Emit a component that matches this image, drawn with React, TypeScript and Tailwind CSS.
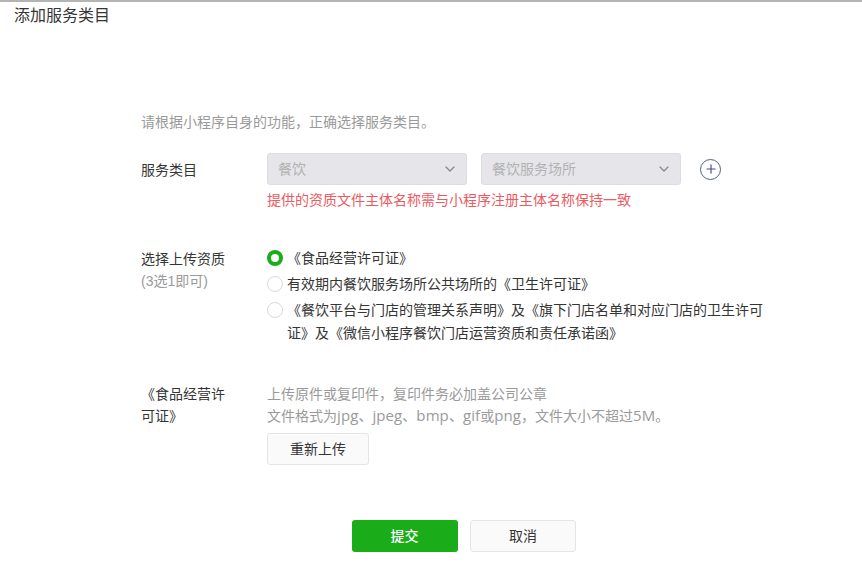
import { ChevronDown, Plus } from 'lucide-react'

const font = "font-['Liberation_Sans','Noto_Sans_CJK_SC',sans-serif]"

function DisabledSelect({ value }: { value: string }) {
  return (
    <div className="flex h-8 w-[200px] items-center justify-between rounded-[3px] border border-[#dcdce2] bg-[#e6e6ea] pl-[10px] pr-[8px] text-[14px] text-[#b2b2b2]">
      <span>{value}</span>
      <ChevronDown size={16} strokeWidth={2} className="text-[#8a8a8a]" />
    </div>
  )
}

function Radio({ checked }: { checked?: boolean }) {
  if (checked) {
    return <span className="mt-[2px] h-4 w-4 shrink-0 rounded-full border-[4px] border-[#1aad19] bg-white" />
  }
  return <span className="mt-[2px] h-4 w-4 shrink-0 rounded-full border border-[#d9d9d9] bg-white" />
}

function Latin({ children }: { children: string }) {
  return <span className="font-['Open_Sans',sans-serif] text-[15px] leading-[20px] tracking-[0.1px]">{children}</span>
}

export default function App() {
  return (
    <div className={`${font} h-[562px] w-[862px] overflow-hidden border-t-2 border-[#b4b4b4] bg-white text-[14px] text-[#353535]`}>
      <h1 className="pl-[14px] pt-[3px] text-[16px] leading-[22px]">添加服务类目</h1>

      <div className="pl-[141px] pt-[84px]">
        <p className="leading-[22px] text-[#9a9a9a]">请根据小程序自身的功能，正确选择服务类目。</p>

        <div className="mt-[20px] flex">
          <div className="w-[126px] pt-[7px] leading-[20px]">服务类目</div>
          <div>
            <div className="flex items-center gap-[14px]">
              <DisabledSelect value="餐饮" />
              <DisabledSelect value="餐饮服务场所" />
              <span className="ml-[5px] flex h-[21px] w-[21px] items-center justify-center rounded-full border border-[#4d5e8c] text-[#3f5285]">
                <Plus size={14} strokeWidth={2} />
              </span>
            </div>
            <p className="mt-[5px] leading-[20px] text-[#ec5a62]">提供的资质文件主体名称需与小程序注册主体名称保持一致</p>
          </div>
        </div>

        <div className="mt-[38px] flex">
          <div className="w-[126px] leading-[22px]">
            <div>选择上传资质</div>
            <div className="text-[#9a9a9a]">(3选1即可)</div>
          </div>
          <div className="w-[510px] leading-[22px]">
            <div className="flex h-[26px] gap-[4px]">
              <Radio checked />
              <span className="-mt-[1px]">《食品经营许可证》</span>
            </div>
            <div className="flex h-[26px] gap-[4px]">
              <Radio />
              <span className="-mt-[1px]">有效期内餐饮服务场所公共场所的《卫生许可证》</span>
            </div>
            <div className="flex gap-[4px]">
              <Radio />
              <span className="-mt-[1px] leading-[23px]">
                《餐饮平台与门店的管理关系声明》及《旗下门店名单和对应门店的卫生许可
                <br />
                证》及《微信小程序餐饮门店运营资质和责任承诺函》
              </span>
            </div>
          </div>
        </div>

        <div className="mt-[38px] flex">
          <div className="w-[126px] leading-[22px]">
            <div>《食品经营许</div>
            <div>可证》</div>
          </div>
          <div>
            <p className="leading-[22px] text-[#9a9a9a]">上传原件或复印件，复印件务必加盖公司公章</p>
            <p className="h-[22px] leading-[22px] text-[#9a9a9a]">
              文件格式为<Latin>jpg</Latin>、<Latin>jpeg</Latin>、<Latin>bmp</Latin>、<Latin>gif</Latin>或<Latin>png</Latin>，文件大小不超过<Latin>5M</Latin>。
            </p>
            <button className="mt-[6px] h-8 w-[102px] rounded-[3px] border border-[#e5e5e5] bg-[#fafafa] text-[#353535]">重新上传</button>
          </div>
        </div>
      </div>

      <div className="mt-[55px] flex justify-center gap-3 pl-[65px]">
        <button className="h-8 w-[106px] rounded-[3px] bg-[#1aad19] font-medium text-white">提交</button>
        <button className="h-8 w-[106px] rounded-[3px] border border-[#e5e5e5] bg-[#fafafa] pl-[1px] text-[#353535]">取消</button>
      </div>
    </div>
  )
}
